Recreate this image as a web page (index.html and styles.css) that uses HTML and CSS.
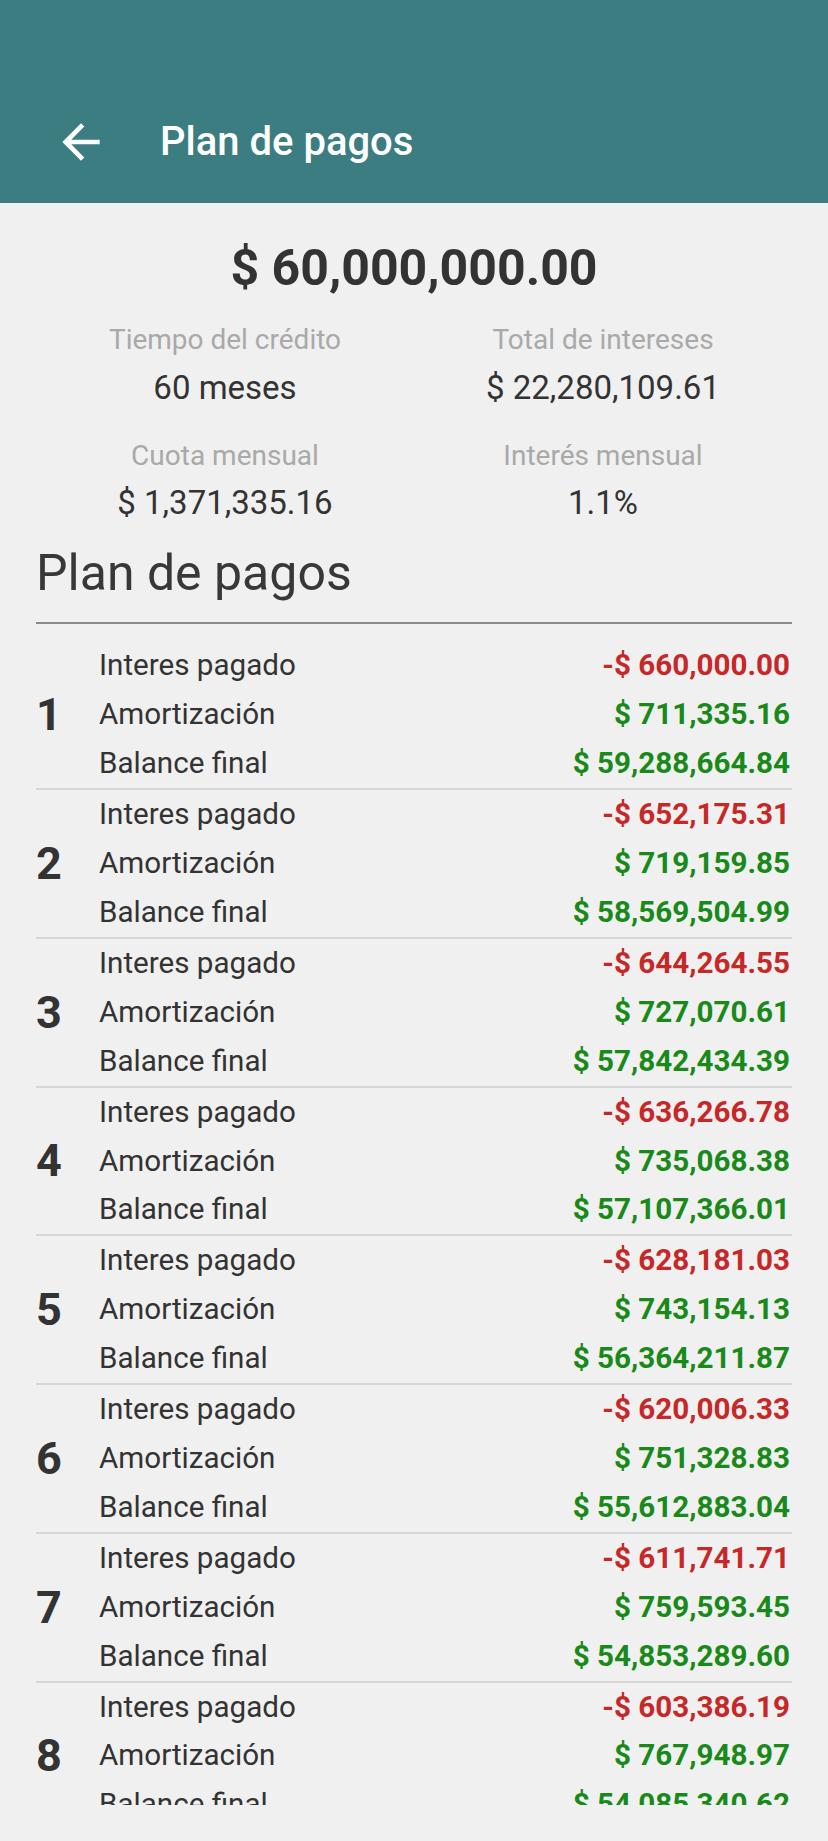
FILE: index.html
```html
<!DOCTYPE html>
<html lang="es">
<head>
    <meta charset="UTF-8">
    <meta name="viewport" content="width=device-width, initial-scale=1.0">
    <title>Plan de pagos</title>
    <link rel="stylesheet" href="styles.css">
</head>
<body>
    <header class="app-bar">
        <div class="toolbar">
            <a href="#" class="back-button" aria-label="Volver">
                <svg viewBox="0 0 24 24" width="56" height="56">
                    <path d="M20 11H7.83l5.59-5.59L12 4l-8 8 8 8 1.41-1.41L7.83 13H20v-2z" fill="#ffffff"/>
                </svg>
            </a>
            <h1 class="toolbar-title">Plan de pagos</h1>
        </div>
    </header>

    <section class="summary">
        <div class="amount">$ 60,000,000.00</div>
        <div class="stats">
            <div class="stat">
                <span class="stat-label">Tiempo del crédito</span>
                <span class="stat-value">60 meses</span>
            </div>
            <div class="stat">
                <span class="stat-label">Total de intereses</span>
                <span class="stat-value">$ 22,280,109.61</span>
            </div>
            <div class="stat">
                <span class="stat-label">Cuota mensual</span>
                <span class="stat-value">$ 1,371,335.16</span>
            </div>
            <div class="stat">
                <span class="stat-label">Interés mensual</span>
                <span class="stat-value">1.1%</span>
            </div>
        </div>
        <h2 class="section-title">Plan de pagos</h2>
    </section>

    <section class="schedule">
        <div class="payment">
            <div class="payment-number">1</div>
            <div class="payment-lines">
                <div class="line"><span>Interes pagado</span><span class="neg">-$ 660,000.00</span></div>
                <div class="line"><span>Amortización</span><span class="pos">$ 711,335.16</span></div>
                <div class="line"><span>Balance final</span><span class="pos">$ 59,288,664.84</span></div>
            </div>
        </div>
        <div class="payment">
            <div class="payment-number">2</div>
            <div class="payment-lines">
                <div class="line"><span>Interes pagado</span><span class="neg">-$ 652,175.31</span></div>
                <div class="line"><span>Amortización</span><span class="pos">$ 719,159.85</span></div>
                <div class="line"><span>Balance final</span><span class="pos">$ 58,569,504.99</span></div>
            </div>
        </div>
        <div class="payment">
            <div class="payment-number">3</div>
            <div class="payment-lines">
                <div class="line"><span>Interes pagado</span><span class="neg">-$ 644,264.55</span></div>
                <div class="line"><span>Amortización</span><span class="pos">$ 727,070.61</span></div>
                <div class="line"><span>Balance final</span><span class="pos">$ 57,842,434.39</span></div>
            </div>
        </div>
        <div class="payment">
            <div class="payment-number">4</div>
            <div class="payment-lines">
                <div class="line"><span>Interes pagado</span><span class="neg">-$ 636,266.78</span></div>
                <div class="line"><span>Amortización</span><span class="pos">$ 735,068.38</span></div>
                <div class="line"><span>Balance final</span><span class="pos">$ 57,107,366.01</span></div>
            </div>
        </div>
        <div class="payment">
            <div class="payment-number">5</div>
            <div class="payment-lines">
                <div class="line"><span>Interes pagado</span><span class="neg">-$ 628,181.03</span></div>
                <div class="line"><span>Amortización</span><span class="pos">$ 743,154.13</span></div>
                <div class="line"><span>Balance final</span><span class="pos">$ 56,364,211.87</span></div>
            </div>
        </div>
        <div class="payment">
            <div class="payment-number">6</div>
            <div class="payment-lines">
                <div class="line"><span>Interes pagado</span><span class="neg">-$ 620,006.33</span></div>
                <div class="line"><span>Amortización</span><span class="pos">$ 751,328.83</span></div>
                <div class="line"><span>Balance final</span><span class="pos">$ 55,612,883.04</span></div>
            </div>
        </div>
        <div class="payment">
            <div class="payment-number">7</div>
            <div class="payment-lines">
                <div class="line"><span>Interes pagado</span><span class="neg">-$ 611,741.71</span></div>
                <div class="line"><span>Amortización</span><span class="pos">$ 759,593.45</span></div>
                <div class="line"><span>Balance final</span><span class="pos">$ 54,853,289.60</span></div>
            </div>
        </div>
        <div class="payment">
            <div class="payment-number">8</div>
            <div class="payment-lines">
                <div class="line"><span>Interes pagado</span><span class="neg">-$ 603,386.19</span></div>
                <div class="line"><span>Amortización</span><span class="pos">$ 767,948.97</span></div>
                <div class="line"><span>Balance final</span><span class="pos">$ 54,085,340.62</span></div>
            </div>
        </div>
    </section>
</body>
</html>
```

FILE: styles.css
```css
body {
    font-family: Roboto, "Noto Sans", sans-serif;
    margin: 0;
    padding: 0;
    background-color: #f0f0f0;
    color: #333333;
    height: 1841px;
    display: flex;
    flex-direction: column;
    overflow: hidden;
}

.app-bar {
    background-color: #3b7d80;
    height: 203px;
    display: flex;
    flex-direction: column;
    justify-content: flex-end;
    flex-shrink: 0;
}

.toolbar {
    height: 122px;
    display: flex;
    align-items: center;
}

.back-button {
    display: flex;
    margin-left: 53px;
    width: 56px;
    height: 56px;
}

.toolbar-title {
    margin: 0 0 0 51px;
    color: white;
    font-size: 40px;
    font-weight: 500;
    line-height: 48px;
}

.summary {
    padding: 35px 36px 0;
    flex-shrink: 0;
}

.amount {
    text-align: center;
    font-size: 50px;
    font-weight: bold;
    line-height: 60px;
    color: #333333;
}

.stats {
    display: grid;
    grid-template-columns: 1fr 1fr;
    row-gap: 28px;
    margin-top: 24.4px;
}

.stat {
    display: flex;
    flex-direction: column;
    align-items: center;
}

.stat-label {
    font-size: 28px;
    line-height: 36px;
    color: #a9a9a9;
}

.stat-value {
    margin-top: 7.3px;
    font-size: 33px;
    line-height: 44px;
    color: #333333;
}

.section-title {
    margin: 17.6px 0 0;
    padding-bottom: 19.5px;
    font-size: 50px;
    font-weight: normal;
    line-height: 60px;
    color: #383838;
    border-bottom: 2px solid #8a8a8a;
}

.schedule {
    flex: 1;
    min-height: 0;
    overflow: hidden;
    margin: 0 36px 36px;
    padding-top: 17.4px;
}

.payment {
    display: flex;
    border-bottom: 2px solid #d6d6d6;
}

.payment-number {
    width: 63px;
    display: flex;
    align-items: center;
    font-size: 45px;
    font-weight: bold;
    color: #333333;
}

.payment-lines {
    flex: 1;
}

.line {
    display: flex;
    justify-content: space-between;
    padding-right: 2px;
    font-size: 29.6px;
    line-height: 48.9px;
    color: #333333;
}

.neg {
    font-weight: bold;
    color: #c62828;
}

.pos {
    font-weight: bold;
    color: #198a19;
}
```
